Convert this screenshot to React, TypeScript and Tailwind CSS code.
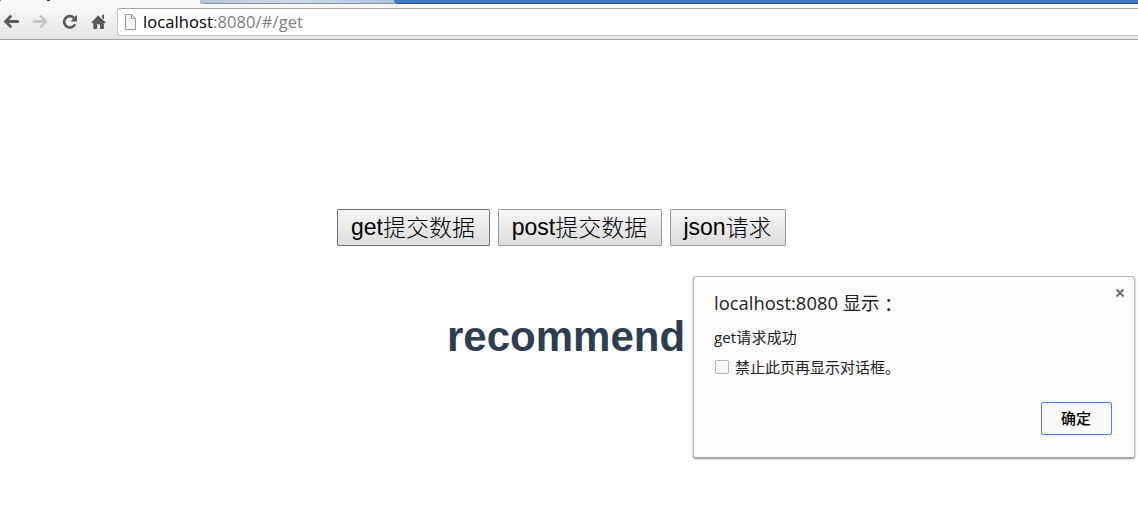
import type { ReactNode } from "react";

function ToolbarIcon({ children, className }: { children: ReactNode; className: string }) {
  return (
    <svg viewBox="0 0 16 16" fill="none" className={`h-4 w-4 shrink-0 ${className}`}>
      {children}
    </svg>
  );
}

function TabStrip() {
  return (
    <div className="flex h-1 overflow-hidden bg-[#f9f9f9]">
      <div className="relative w-[200px]">
        <span className="absolute left-0 top-0 h-[1px] w-[1px] bg-[#5b86bd]" />
        <span className="absolute left-[47px] top-0 h-[1px] w-[3px] bg-[#333]" />
      </div>
      <div className="w-[194px] rounded-bl-[3px] border-b border-[#8393aa] bg-linear-to-r from-[#b9c5d3] via-[#cbdaee] to-[#adc3e0]" />
      <div className="flex-1 rounded-bl-[3px] border-b border-[#1f5493] bg-[#3d7dca]" />
    </div>
  );
}

function Toolbar() {
  return (
    <div className="flex h-9 items-center border-b border-[#a3a3a3] bg-linear-to-b from-[#f9f9f9] to-[#e5e5e5] pl-[3px]">
      <ToolbarIcon className="text-[#5a5a5a]">
        <path d="M14.7 7.5H3M7.5 2.5l-5 5 5 5" stroke="currentColor" strokeWidth="2.8" strokeLinecap="round" />
      </ToolbarIcon>
      <ToolbarIcon className="ml-[13px] text-[#c6c6c6]">
        <path d="M2 7.5h11.5M9 2.5l5 5-5 5" stroke="currentColor" strokeWidth="2.8" strokeLinecap="round" />
      </ToolbarIcon>
      <ToolbarIcon className="ml-[13px] text-[#5a5a5a]">
        <path d="M14 10.2A5.7 5.7 0 1 1 12.8 3.7" stroke="currentColor" strokeWidth="2.7" />
        <path d="M16 .8v6.6H9.4z" fill="currentColor" />
      </ToolbarIcon>
      <ToolbarIcon className="ml-[13px] text-[#5a5a5a]">
        <path d="M8 1.5L1.3 8.6l1 1L3.3 8.7V15h3.9v-4.7h2.8V15h3.9V8.7l1 .9 1-1z" fill="currentColor" />
        <path d="M12 .8h2v4.6l-2-2z" fill="currentColor" />
      </ToolbarIcon>
      <div className="ml-[11px] flex h-7 flex-1 items-center rounded-l-[3px] border border-r-0 border-[#c3c3c3] border-t-[#a6a6a6] bg-white pl-[6px]">
        <svg viewBox="0 0 12 16" fill="none" className="h-4 w-3 shrink-0">
          <path d="M1.5.5h6l4 4v11h-10z" fill="#f7f7f7" stroke="#999" />
          <path d="M7.5.5v4h4" stroke="#999" />
        </svg>
        <p className="ml-[7px] whitespace-nowrap font-['Open_Sans',sans-serif] text-[16.5px] leading-6 tracking-[0.1px] text-[#808080]">
          <span className="text-black">localhost</span>:8080/#/get
        </p>
      </div>
    </div>
  );
}

function RequestButton({ label, text, className }: { label: string; text: string; className: string }) {
  return (
    <button
      className={`flex h-[37px] items-center justify-center whitespace-nowrap rounded-[1px] border bg-linear-to-b from-[#f6f6f6] to-[#dddddd] pr-[1px] font-['Liberation_Sans','Noto_Sans_CJK_SC',sans-serif] text-[23px] leading-none text-black ${className}`}
    >
      {label}
      <span className="pb-[2px] font-['Noto_Sans_CJK_SC',sans-serif] font-light">{text}</span>
    </button>
  );
}

function AlertDialog() {
  return (
    <div className="absolute left-[693px] top-[276px] flex h-[182px] w-[442px] flex-col rounded-[3px] border border-[#b9b9b9] border-b-[#a5a5a5] bg-[#fbfbfb] pl-5 pr-[22px] pt-3 font-['Open_Sans','Noto_Sans_CJK_SC',sans-serif] text-[#222] shadow-[0_1px_2px_rgba(0,0,0,0.45)]">
      <button className="absolute right-[9px] top-[11px] h-[10px] w-[10px]">
        <svg viewBox="0 0 10 10" className="h-[10px] w-[10px]">
          <path d="M1.5 1.5l7 7M8.5 1.5l-7 7" stroke="#777" strokeWidth="2.4" />
        </svg>
      </button>
      <h2 className="flex h-7 whitespace-pre text-[18.4px] leading-7">
        localhost:8080 显示<span className="pt-[1px] font-['Noto_Sans_CJK_TC',sans-serif]">：</span>
      </h2>
      <p className="mt-2 h-6 whitespace-nowrap text-[15px] leading-6 tracking-[0.15px]">get请求成功</p>
      <label className="mt-[6px] flex h-6 items-center whitespace-nowrap text-[15px] leading-6">
        <input type="checkbox" className="ml-[1px] mr-[6px] h-[14px] w-[14px] appearance-none rounded-[2px] border border-[#b5b5b5] bg-[#f8f8f8]" />
        禁止此页再显示对话框。
      </label>
      <button className="mt-[23px] h-[33px] w-[71px] self-end rounded-[2px] border border-[#4285f4] bg-[#f9f9f9] pr-[1px] text-[15px] font-medium leading-none text-black">
        确定
      </button>
    </div>
  );
}

export default function App() {
  return (
    <div className="relative h-[513px] w-full overflow-hidden bg-white">
      <TabStrip />
      <Toolbar />
      <main className="pl-[337px] pt-[169px]">
        <div className="flex gap-2">
          <RequestButton label="get" text="提交数据" className="w-[153px] border-[#707070]" />
          <RequestButton label="post" text="提交数据" className="w-[164px] border-[#999]" />
          <RequestButton label="json" text="请求" className="w-[116px] border-[#999]" />
        </div>
        <h1 className="ml-[110px] mt-[67px] font-['Liberation_Sans',sans-serif] text-[42px] font-bold leading-[48px] text-[#2c3e50]">
          recommend
        </h1>
      </main>
      <AlertDialog />
    </div>
  );
}
